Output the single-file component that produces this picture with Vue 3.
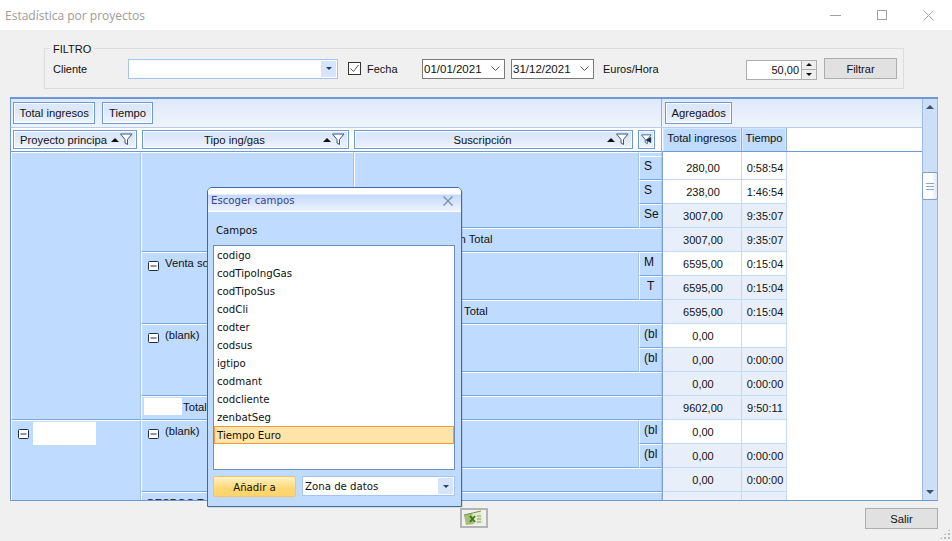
<script setup>
const fields = ['codigo','codTipoIngGas','codTipoSus','codCli','codter','codsus','igtipo','codmant','codcliente','zenbatSeg','Tiempo Euro']

const cells = [
  { c: [1, 2], r: [1, 13] },
  { c: [1, 2], r: [13, 17], icon: true, box: 'box-name' },
  { c: [2, 3], r: [1, 6] },
  { c: [2, 3], r: [6, 9], icon: true, text: 'Venta so' },
  { c: [2, 3], r: [9, 12], icon: true, text: '(blank)' },
  { c: [2, 5], r: [12, 13], box: 'box-total', text: 'Total' },
  { c: [2, 3], r: [13, 16], icon: true, text: '(blank)' },
  { c: [2, 3], r: [16, 17], text: 'GESPOC T', cls: 'cut' },
  { c: [3, 4], r: [1, 5] },
  { c: [3, 5], r: [5, 6], text: 'in Total', cls: 'sub1' },
  { c: [3, 4], r: [6, 8] },
  { c: [3, 5], r: [8, 9], text: 'Total', cls: 'sub2' },
  { c: [3, 4], r: [9, 11] },
  { c: [3, 5], r: [11, 12] },
  { c: [3, 4], r: [13, 15] },
  { c: [3, 5], r: [15, 16] },
  { c: [3, 5], r: [16, 17] },
  { c: [4, 5], r: [1, 2] },
  { c: [4, 5], r: [2, 3], text: 'S', cls: 'short' },
  { c: [4, 5], r: [3, 4], text: 'S', cls: 'short' },
  { c: [4, 5], r: [4, 5], text: 'Se', cls: 'short' },
  { c: [4, 5], r: [6, 7], text: 'M', cls: 'short' },
  { c: [4, 5], r: [7, 8], text: 'T', cls: 'short tee' },
  { c: [4, 5], r: [9, 10], text: '(bl', cls: 'short' },
  { c: [4, 5], r: [10, 11], text: '(bl', cls: 'short' },
  { c: [4, 5], r: [13, 14], text: '(bl', cls: 'short' },
  { c: [4, 5], r: [14, 15], text: '(bl', cls: 'short' },
]

const values = [
  ['', '', 0],
  ['280,00', '0:58:54', 0],
  ['238,00', '1:46:54', 0],
  ['3007,00', '9:35:07', 1],
  ['3007,00', '9:35:07', 1],
  ['6595,00', '0:15:04', 0],
  ['6595,00', '0:15:04', 1],
  ['6595,00', '0:15:04', 1],
  ['0,00', '', 0],
  ['0,00', '0:00:00', 1],
  ['0,00', '0:00:00', 1],
  ['9602,00', '9:50:11', 1],
  ['0,00', '', 0],
  ['0,00', '0:00:00', 1],
  ['0,00', '0:00:00', 1],
  ['', '', 1],
]

const area = (x) => ({ gridColumn: `${x.c[0]} / ${x.c[1]}`, gridRow: `${x.r[0]} / ${x.r[1]}` })
const valuePos = (i, col) => ({ gridColumn: `${col}`, gridRow: `${i + 1}` })
</script>

<template>
  <div class="window">
    <header class="titlebar">
      <span class="title">Estadística por proyectos</span>
      <div class="winbtns">
        <svg width="12" height="12" viewBox="0 0 12 12"><path d="M0 6.500h11" stroke="#a0a0a0" fill="none"/></svg>
        <svg width="11" height="11" viewBox="0 0 11 11"><rect x=".5" y=".5" width="9" height="9" stroke="#a0a0a0" fill="none"/></svg>
        <svg width="11" height="11" viewBox="0 0 11 11"><path d="M.5.5l10 10M10.500.5l-10 10" stroke="#a8a8a8" fill="none"/></svg>
      </div>
    </header>

    <section class="filter">
      <span class="legend">FILTRO</span>
      <span class="lbl lbl-cliente">Cliente</span>
      <div class="combo">
        <div class="combo-btn"><i class="tri-down"></i></div>
      </div>
      <label class="check">
        <svg width="13" height="13" viewBox="0 0 13 13"><rect x=".5" y=".5" width="12" height="12" fill="#fff" stroke="#333"/><path d="M2.500 6.500l3 3 5-6.500" fill="none" stroke="#555"/></svg>
        <span>Fecha</span>
      </label>
      <div class="date date1">01/01/2021<svg width="10" height="6" viewBox="0 0 10 6"><path d="M.5.5l4 4 4-4" fill="none" stroke="#555"/></svg></div>
      <div class="date date2">31/12/2021<svg width="10" height="6" viewBox="0 0 10 6"><path d="M.5.5l4 4 4-4" fill="none" stroke="#555"/></svg></div>
      <span class="lbl lbl-euros">Euros/Hora</span>
      <div class="numeric">
        <span class="num-val">50,00</span>
        <div class="spin"><span><i class="tri-up-s"></i></span><span><i class="tri-down-s"></i></span></div>
      </div>
      <button class="win-btn filtrar">Filtrar</button>
    </section>

    <section class="pivot">
      <div class="pivot-main">
        <div class="band">
          <div class="band-left">
            <div class="field">Total ingresos</div>
            <div class="field">Tiempo</div>
          </div>
          <div class="band-right">
            <div class="field">Agregados</div>
          </div>
        </div>
        <div class="heads">
          <div class="heads-left">
            <div class="hcell h1"><span class="hname left">Proyecto principa</span><i class="tri-up"></i><svg class="funnel" width="13" height="13" viewBox="0 0 13 13"><path d="M.5 1h11.500L7.500 6.500v5l-2.500-1.500V6.500z" fill="#fff" stroke="#34557f"/></svg></div>
            <div class="hcell h2"><span class="hname">Tipo ing/gas</span><i class="tri-up"></i><svg class="funnel" width="13" height="13" viewBox="0 0 13 13"><path d="M.5 1h11.500L7.500 6.500v5l-2.500-1.500V6.500z" fill="#fff" stroke="#34557f"/></svg></div>
            <div class="hcell h3"><span class="hname">Suscripción</span><i class="tri-up"></i><svg class="funnel" width="13" height="13" viewBox="0 0 13 13"><path d="M.5 1h11.500L7.500 6.500v5l-2.500-1.500V6.500z" fill="#fff" stroke="#34557f"/></svg></div>
            <div class="hcell h4"><svg width="13" height="13" viewBox="0 0 13 13"><path d="M.5 1h11.500L7.500 6.500v5l-2.500-1.500V6.500z" fill="#fff" stroke="#34557f"/><path d="M5 7l7-3.500v7z" fill="#1d2f4a"/></svg></div>
          </div>
          <div class="vhead">
            <div class="vh vh1">Total ingresos</div>
            <div class="vh vh2">Tiempo</div>
          </div>
        </div>
        <div class="body">
          <div class="grid">
            <div v-for="(x, i) in cells" :key="i" class="cell" :class="x.cls" :style="area(x)">
              <svg v-if="x.icon" class="exp" width="11" height="11" viewBox="0 0 11 11"><rect x=".5" y=".5" width="10" height="9" rx="1" fill="#fff" stroke="#1d2f4a"/><path d="M2.500 5h6" stroke="#1d2f4a"/></svg>
              <span v-if="x.box" :class="x.box"></span>
              <span v-if="x.text" class="ctext">{{ x.text }}</span>
            </div>
            <div class="vsep"></div>
            <template v-for="(v, i) in values" :key="i">
              <div class="val" :class="{ alt: v[2] }" :style="valuePos(i, 6)">{{ v[0] }}</div>
              <div class="val" :class="{ alt: v[2] }" :style="valuePos(i, 7)">{{ v[1] }}</div>
            </template>
          </div>
        </div>
      </div>
      <aside class="scroll">
        <i class="sc-up"></i>
        <div class="thumb"><span></span></div>
        <i class="sc-down"></i>
      </aside>
    </section>

    <footer class="foot">
      <button class="excel" aria-label="Excel">
        <svg width="22" height="16" viewBox="0 0 22 16">
          <path d="M1 5l17-4 2 12-17 2z" fill="#e2ecce"/>
          <path d="M1 5l8-2 2 11-8 1z" fill="#a3bf78"/>
          <path d="M1 5l17-4" stroke="#6f9a48" fill="none"/>
          <path d="M7 6l5 6M12 6l-5 6" stroke="#3f6f22" stroke-width="1.800" fill="none"/>
          <path d="M14 6h4M14 9h4M14 12h4" stroke="#7ca555" fill="none"/>
        </svg>
      </button>
      <button class="win-btn salir">Salir</button>
    </footer>
    <div class="grip"></div>

    <div class="dialog">
      <div class="dlg-title">
        <span>Escoger campos</span>
        <svg width="10" height="10" viewBox="0 0 10 10"><path d="M.5.5l9 9M9.500.5l-9 9" stroke="#7f8ea5" stroke-width="1.400" fill="none"/></svg>
      </div>
      <div class="dlg-body">
        <div class="dlg-label">Campos</div>
        <ul class="list">
          <li v-for="f in fields" :key="f" :class="{ sel: f === 'Tiempo Euro' }">{{ f }}</li>
        </ul>
        <div class="dlg-actions">
          <button class="add">Añadir a</button>
          <div class="zone">
            <span>Zona de datos</span>
            <div class="combo-btn zone-btn"><i class="tri-down"></i></div>
          </div>
        </div>
      </div>
    </div>
  </div>
</template>

<style>
html, body { margin: 0; padding: 0; background: #f0f0f0; }
</style>

<style scoped>
.window {
  position: relative;
  width: 952px;
  height: 541px;
  overflow: hidden;
  background: #f0f0f0;
  color: #111;
  font: 11.250px/14px "Liberation Sans", Arial, sans-serif;
  display: flex;
  flex-direction: column;
}
.titlebar {
  height: 30px;
  flex: none;
  background: #fff;
  display: flex;
  align-items: center;
  justify-content: space-between;
  padding-left: 5px;
}
.title { font: 12px "Open Sans", sans-serif; color: #9b9b9b; }
.winbtns { display: flex; align-items: center; gap: 35px; margin-right: 18px; }

.filter {
  position: relative;
  box-sizing: border-box;
  flex: none;
  width: 860px;
  height: 41px;
  margin: 18px 0 0 44px;
  border: 1px solid #dcdcdc;
  display: flex;
  align-items: center;
  padding: 0 5px 0 8px;
  font-size: 11px;
}
.legend {
  position: absolute;
  left: 5px;
  top: -7px;
  padding: 0 3px;
  background: #f0f0f0;
  font-size: 11px;
}
.lbl-cliente { width: 75px; flex: none; }
.combo {
  box-sizing: border-box;
  width: 210px;
  height: 20px;
  flex: none;
  background: #fff;
  border: 1px solid #a5c4ee;
  display: flex;
  justify-content: flex-end;
  padding: 1px;
}
.combo-btn {
  width: 15px;
  background: #d6e5fb;
  display: flex;
  align-items: center;
  justify-content: center;
}
.tri-down { width: 0; height: 0; border: 3px solid transparent; border-top: 3px solid #24407a; border-bottom: 0; }
.check { display: flex; align-items: center; gap: 6px; margin-left: 10px; width: 74px; flex: none; }
.date {
  box-sizing: border-box;
  height: 20px;
  flex: none;
  background: #fff;
  border: 1px solid #7a7a7a;
  font-size: 11.500px;
  display: flex;
  align-items: center;
  justify-content: space-between;
  padding: 0 3px 0 1px;
}
.date1 { width: 83px; }
.date2 { width: 83px; margin-left: 6px; }
.lbl-euros { margin-left: 9px; width: 143px; flex: none; }
.numeric {
  box-sizing: border-box;
  width: 71px;
  height: 20px;
  margin-top: 2px;
  flex: none;
  background: #fff;
  border: 1px solid #adadad;
  display: flex;
  justify-content: flex-end;
  align-items: center;
}
.num-val { margin-right: 2px; }
.spin { width: 14px; height: 18px; display: flex; flex-direction: column; border-left: 1px solid #adadad; }
.spin span { flex: 1; display: flex; align-items: center; justify-content: center; background: #eee; border-bottom: 1px solid #adadad; }
.spin span:last-child { border-bottom: 0; }
.tri-up-s { border: 3px solid transparent; border-bottom: 3px solid #111; border-top: 0; }
.tri-down-s { border: 3px solid transparent; border-top: 3px solid #111; border-bottom: 0; }
.win-btn {
  box-sizing: border-box;
  width: 73px;
  background: #e1e1e1;
  border: 1px solid #adadad;
  font: inherit;
  color: #111;
  padding: 0;
}
.filtrar { height: 21px; margin-left: 7px; flex: none; }

.pivot {
  box-sizing: border-box;
  flex: none;
  width: 928px;
  height: 404px;
  margin: 8px 0 0 10px;
  border-top: 2px solid #6d9ad6;
  border-bottom: 1px solid #6d9ad6;
  border-left: 1px solid #6d9ad6;
  display: flex;
  background: #fff;
}
.pivot-main { flex: 1; min-width: 0; display: flex; flex-direction: column; }
.band {
  height: 28px;
  flex: none;
  display: flex;
  background: linear-gradient(#dfe9fa, #eff4fd);
}
.band-left { width: 651px; flex: none; display: flex; gap: 7px; padding: 3px 0 0 2px; box-sizing: border-box; border-right: 1px solid #8fb0e2; }
.band-right { padding: 3px 0 0 3px; }
.field {
  box-sizing: border-box;
  height: 22px;
  padding: 0 5.500px;
  border: 1px solid #6d9ad6;
  box-shadow: inset 0 0 0 1px #fff;
  background: linear-gradient(#dce7fa 0 35%, #eef3fd);
  display: flex;
  align-items: center;
}
.heads { height: 25px; flex: none; display: flex; border-top: 1px solid #b9cdeb; box-sizing: border-box; }
.heads-left { position: relative; width: 651px; flex: none; display: flex; align-items: flex-start; padding: 2px 0 0 2px; box-sizing: border-box; border-right: 1px solid #8fb0e2; }
.hcell {
  box-sizing: border-box;
  height: 19px;
  border: 1px solid #6d9ad6;
  box-shadow: inset 0 0 0 1px #fff;
  background: linear-gradient(#dce7fa 0 35%, #eef3fd);
  display: flex;
  align-items: center;
  padding: 0 3px 0 6px;
}
.h1 { width: 124px; }
.h2 { width: 207px; margin-left: 5px; }
.h3 { width: 279px; margin-left: 5px; }
.h4 { width: 17px; margin-left: 5px; padding: 0 2px; }
.hname { flex: 1; text-align: center; white-space: nowrap; overflow: hidden; padding-right: 3px; }
.hname.left { text-align: left; padding-right: 0; }
.tri-up { width: 0; height: 0; border: 4px solid transparent; border-bottom: 4px solid #111; border-top: 0; margin-right: 1px; flex: none; }
.funnel { flex: none; }
.vhead { display: flex; height: 24px; margin-left: 1px; border-bottom: 1px solid #8fb0e2; border-right: 1px solid #8fb0e2; }
.vh {
  box-sizing: border-box;
  background: #bfdbff;
  box-shadow: inset 0 0 0 1px #d9e7fb;
  padding-top: 3px;
  text-align: center;
  white-space: nowrap;
}
.vh1 { width: 79px; border-right: 1px solid #8fb0e2; }
.vh2 { width: 44px; }
.body { flex: 1; min-height: 0; overflow: hidden; border-top: 1px solid #6d9ad6; margin-top: -1px; }
.grid {
  display: grid;
  grid-template-columns: 130px 213px 285px 23px 1px 79px 45px;
  grid-template-rows: 4px repeat(15, 24px);
  width: 776px;
}
.cell {
  box-sizing: border-box;
  background: #bfdbff;
  border-top: 1px solid #fff;
  border-left: 1px solid #fff;
  border-right: 1px solid #a3c2ec;
  border-bottom: 1px solid #7fa4da;
  padding: 3px 0 0 7px;
  display: flex;
  align-items: flex-start;
  overflow: hidden;
  white-space: nowrap;
}
.exp { margin: 5px 6px 0 -1px; flex: none; }
.ctext { line-height: 14px; }
.short { padding: 2px 0 0 4px; font-size: 12px; }
.tee { padding-left: 7px; }
.cut { padding: 3px 0 0 4px; }
.sub1 { padding-left: 102px; }
.sub2 { padding-left: 109px; }
.box-name { width: 63px; height: 23px; background: #fff; margin: -2px 0 0 -2px; flex: none; }
.box-total { width: 38px; height: 17px; background: #fff; margin: -2px 1px 0 -5px; flex: none; }
.vsep { grid-column: 5; grid-row: 1 / 17; background: #7fa4da; }
.val {
  box-sizing: border-box;
  background: #fff;
  border-right: 1px solid #c5daf5;
  border-bottom: 1px solid #c5daf5;
  text-align: center;
  padding: 5px 0 0 2px;
  font-size: 11px;
  overflow: hidden;
  white-space: nowrap;
}
.val.alt { background: #e8effa; }

.scroll {
  box-sizing: border-box;
  width: 16px;
  flex: none;
  background: #cddff7;
  border-left: 1px solid #9dbbe6;
  border-right: 1px solid #9dbbe6;
  display: flex;
  flex-direction: column;
  align-items: center;
}
.sc-up { margin-top: 6px; border: 4px solid transparent; border-bottom: 4px solid #3f4f6e; border-top: 0; }
.sc-down { margin-top: auto; margin-bottom: 6px; border: 4px solid transparent; border-top: 4px solid #3f4f6e; border-bottom: 0; }
.thumb {
  box-sizing: border-box;
  width: 16px;
  height: 28px;
  margin-top: 63px;
  border: 1px solid #7f9fcf;
  border-radius: 2px;
  background: linear-gradient(90deg, #fff 60%, #dce8fa);
  display: flex;
  align-items: center;
  justify-content: center;
  flex: none;
}
.thumb span { width: 8px; height: 5px; border-top: 1px solid #8aa6cf; border-bottom: 1px solid #8aa6cf; position: relative; background: linear-gradient(#8aa6cf, #8aa6cf) center / 100% 1px no-repeat; }

.foot { flex: 1; display: flex; align-items: flex-start; padding: 7px 14px 0 460px; justify-content: space-between; }
.excel {
  box-sizing: border-box;
  width: 28px;
  height: 20px;
  padding: 0;
  border: 2px solid #b4b4b4;
  background: #f0f0f0;
  display: flex;
  align-items: center;
  justify-content: center;
}
.salir { height: 21px; }
.grip {
  position: absolute;
  right: 2px;
  bottom: 2px;
  width: 10px;
  height: 10px;
  background: radial-gradient(circle at 1px 1px, #b8b8b8 1px, transparent 1.2px) 0 0 / 4px 4px;
  clip-path: polygon(100% 0, 100% 100%, 0 100%);
}

.dialog {
  position: absolute;
  left: 207px;
  top: 187px;
  box-sizing: border-box;
  width: 255px;
  height: 320px;
  border: 1px solid #3e6aa4;
  border-radius: 5px 5px 0 0;
  background: #bfdbff;
  display: flex;
  flex-direction: column;
  font: 10.200px/14px "DejaVu Sans", sans-serif;
  box-shadow: 1px 1px 0 rgba(0,0,0,.08);
  z-index: 5;
}
.dlg-title {
  height: 24px;
  flex: none;
  box-sizing: border-box;
  border-radius: 4px 4px 0 0;
  background: linear-gradient(#fff 0 6px, #c4d9fa 7px, #eef4fe);
  border-bottom: 1px solid #fff;
  display: flex;
  align-items: center;
  justify-content: space-between;
  padding: 2px 8px 0 3px;
  color: #3b3f96;
}
.dlg-body { flex: 1; display: flex; flex-direction: column; padding: 0 6px 0 5px; }
.dlg-label { margin: 12px 0 0 3px; height: 21px; }
.list {
  box-sizing: border-box;
  list-style: none;
  margin: 0;
  padding: 0;
  height: 225px;
  background: #fff;
  border: 1px solid #6d8fc0;
}
.list li { box-sizing: border-box; height: 18px; line-height: 20px; padding-left: 3px; color: #111; overflow: hidden; }
.list li.sel { background: #fee4a8; border: 1px solid #f79a3e; line-height: 18px; padding-left: 2px; }
.dlg-actions { display: flex; gap: 6px; margin-top: 6px; align-items: flex-start; }
.add {
  box-sizing: border-box;
  width: 83px;
  height: 21px;
  padding: 2px 0 0;
  font: inherit;
  color: #111;
  border: 1px solid #f5c26b;
  border-radius: 2px;
  background: linear-gradient(#fff3c8, #ffd873 60%, #fcd36b);
}
.zone {
  box-sizing: border-box;
  flex: 1;
  height: 20px;
  background: #fff;
  border: 1px solid #a5c4ee;
  display: flex;
  align-items: stretch;
  justify-content: space-between;
  padding: 1px 1px 1px 2px;
}
.zone span { line-height: 18px; }
</style>
